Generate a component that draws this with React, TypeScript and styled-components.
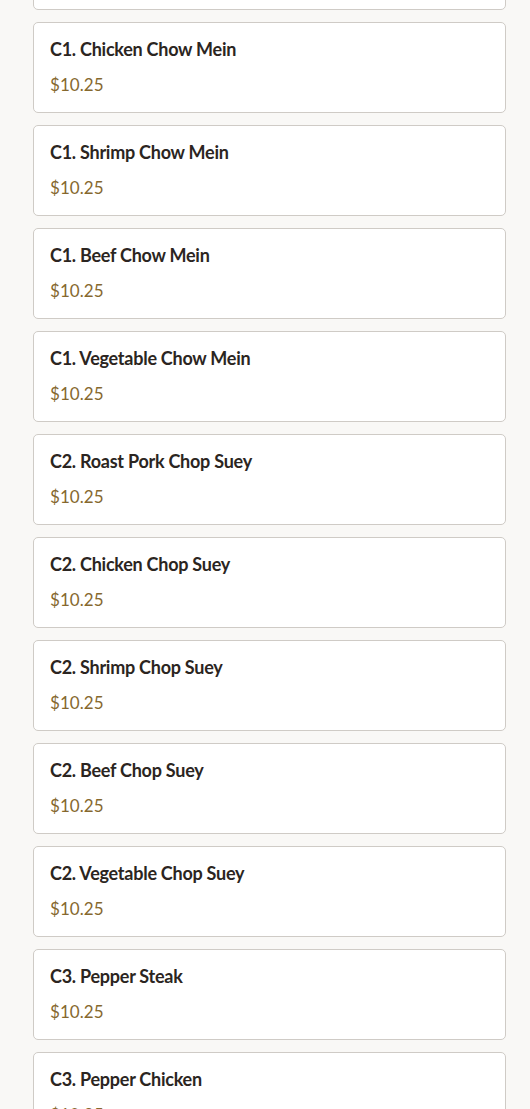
import React from "react";
import styled, { createGlobalStyle } from "styled-components";

const Global = createGlobalStyle`
  html, body { margin: 0; padding: 0; background: #f9f8f6; }
  body { font-family: Lato, "Open Sans", sans-serif; overflow: hidden; }
`;

const Page = styled.div`
  background: #f9f8f6;
  padding: 0 24px 0 33px;
  height: 1109px;
  overflow: hidden;
`;

const List = styled.div`
  display: flex;
  flex-direction: column;
  gap: 12px;
  margin-top: -81px;
`;

const Card = styled.div`
  background: #ffffff;
  border: 1px solid #cfcbc6;
  border-radius: 5px;
  padding: 15px 16px;
  height: 91px;
  box-sizing: border-box;
  display: flex;
  flex-direction: column;
  gap: 13px;
`;

const Title = styled.div`
  font-family: Lato, sans-serif;
  font-weight: 700;
  font-size: 18px;
  line-height: 22px;
  color: #2b2521;
  letter-spacing: -0.25px;
`;

const Price = styled.div`
  font-family: Lato, sans-serif;
  font-weight: 400;
  font-size: 17px;
  line-height: 24px;
  color: #86682e;
  letter-spacing: 0.05px;
`;

const items = [
  "C1. Roast Pork Chow Mein",
  "C1. Chicken Chow Mein",
  "C1. Shrimp Chow Mein",
  "C1. Beef Chow Mein",
  "C1. Vegetable Chow Mein",
  "C2. Roast Pork Chop Suey",
  "C2. Chicken Chop Suey",
  "C2. Shrimp Chop Suey",
  "C2. Beef Chop Suey",
  "C2. Vegetable Chop Suey",
  "C3. Pepper Steak",
  "C3. Pepper Chicken",
];

export default function App() {
  return (
    <>
      <Global />
      <Page>
        <List>
          {items.map((name) => (
            <Card key={name}>
              <Title>{name}</Title>
              <Price>$10.25</Price>
            </Card>
          ))}
        </List>
      </Page>
    </>
  );
}
